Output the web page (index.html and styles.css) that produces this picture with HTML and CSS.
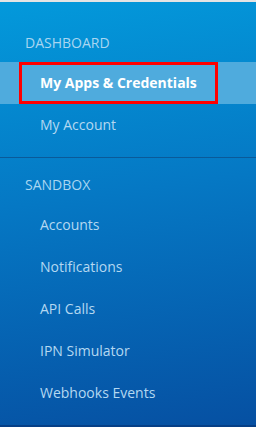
FILE: index.html
```html
<!DOCTYPE html>
<html lang="en">
<head>
    <meta charset="UTF-8">
    <meta name="viewport" content="width=device-width, initial-scale=1.0">
    <title>Developer Dashboard</title>
    <link rel="stylesheet" href="styles.css">
</head>
<body>
    <nav class="side-nav">
        <div class="nav-section">
            <div class="nav-heading">DASHBOARD</div>
            <a class="nav-item active" href="#"><span class="item-box">My Apps &amp; Credentials</span></a>
            <a class="nav-item" href="#"><span class="item-box">My Account</span></a>
        </div>
        <div class="nav-section sandbox">
            <div class="nav-heading">SANDBOX</div>
            <a class="nav-item" href="#"><span class="item-box">Accounts</span></a>
            <a class="nav-item" href="#"><span class="item-box">Notifications</span></a>
            <a class="nav-item" href="#"><span class="item-box">API Calls</span></a>
            <a class="nav-item" href="#"><span class="item-box">IPN Simulator</span></a>
            <a class="nav-item" href="#"><span class="item-box">Webhooks Events</span></a>
        </div>
    </nav>
</body>
</html>
```

FILE: styles.css
```css
html, body {
    margin: 0;
    padding: 0;
}
body {
    font-family: "Open Sans", "DejaVu Sans", sans-serif;
    font-size: 14px;
}
.side-nav {
    height: 427px;
    box-sizing: border-box;
    border-top: 2px solid #e4e4e4;
    border-bottom: 2px solid #063f86;
    padding-top: 18px;
    background: linear-gradient(172deg, #0399db 0%, #0578c4 45%, #0650a2 100%);
}
.nav-section {
    padding-bottom: 11px;
    border-bottom: 1px solid #0a5a99;
}
.nav-section.sandbox {
    padding-top: 4px;
    border-bottom: none;
}
.nav-heading {
    height: 40px;
    padding-top: 2px;
    line-height: 42px;
    padding-left: 25px;
    color: #a9d6f1;
}
.nav-item {
    display: block;
    height: 42px;
    padding-left: 19px;
    color: #b4d8f1;
    text-decoration: none;
}
.item-box {
    display: block;
    width: 199px;
    height: 42px;
    line-height: 36px;
    box-sizing: border-box;
    border: 3px solid transparent;
    padding-left: 18px;
}
.nav-item.active {
    background-color: #4fabdd;
    color: #ffffff;
    font-weight: bold;
}
.nav-item.active .item-box {
    border-color: #ff0000;
}
```
